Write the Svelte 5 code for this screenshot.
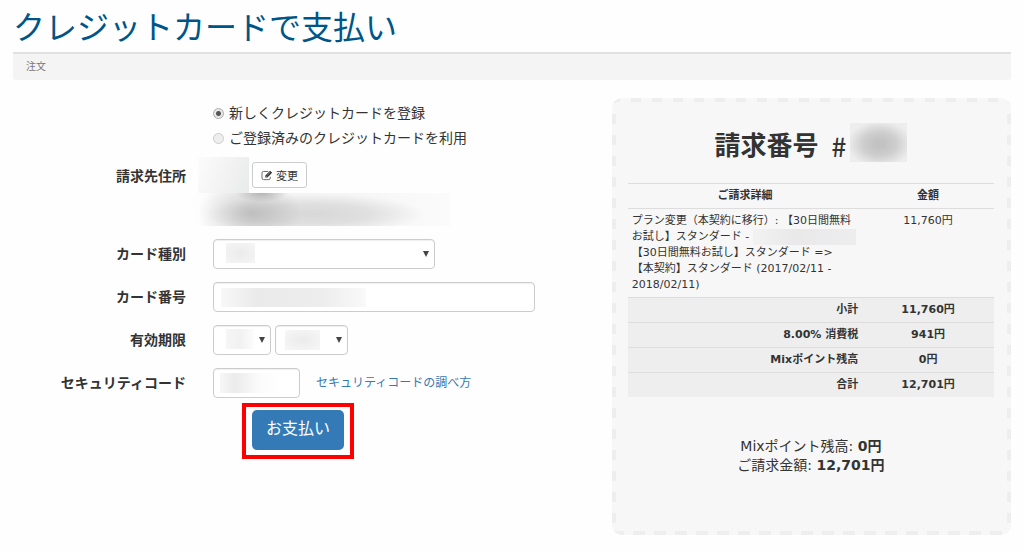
<script>
  let method = $state('new');
  const totals = [
    ['小計', '11,760円'],
    ['8.00% 消費税', '941円'],
    ['Mixポイント残高', '0円'],
    ['合計', '12,701円'],
  ];
</script>

<main>
  <h1>クレジットカードで支払い</h1>
  <nav class="crumb">注文</nav>

  <div class="columns">
    <form onsubmit={(e) => e.preventDefault()}>
      <div class="row methods">
        <div class="field stack">
          <label class="choice"><input type="radio" name="method" value="new" bind:group={method} />新しくクレジットカードを登録</label>
          <label class="choice"><input type="radio" name="method" value="saved" bind:group={method} />ご登録済みのクレジットカードを利用</label>
        </div>
      </div>

      <div class="row address">
        <span class="label">請求先住所</span>
        <div class="addr">
          <div class="addr-top">
            <span class="mask name"></span>
            <button type="button" class="edit">
              <svg viewBox="0 0 14 13" width="12" height="11" aria-hidden="true">
                <path d="M8.6 1.7H3A1.9 1.9 0 0 0 1.100 3.600V9.500A1.900 1.900 0 0 0 3 11.400H9A1.900 1.900 0 0 0 10.900 9.500V8" fill="none" stroke="#555" stroke-width="1" />
                <path d="M5 6.600L10.700 .9L13.100 3.300L7.400 9H5Z" fill="#333" />
                <path d="M6 7L7 8M7.300 6L10.400 2.900" stroke="#fff" stroke-width=".6" />
              </svg>
              変更
            </button>
          </div>
          <div class="mask lines"></div>
        </div>
      </div>

      <div class="row">
        <label class="label" for="kind">カード種別</label>
        <div class="field"><span class="drop wide"><select id="kind" class="m-kind"><option></option></select></span></div>
      </div>
      <div class="row">
        <label class="label" for="number">カード番号</label>
        <div class="field"><input id="number" class="text number" type="text" /></div>
      </div>
      <div class="row">
        <label class="label" for="month">有効期限</label>
        <div class="field">
          <span class="drop month"><select id="month" class="m-month"><option></option></select></span>
          <span class="drop year"><select aria-label="年" class="m-year"><option></option></select></span>
        </div>
      </div>
      <div class="row">
        <label class="label" for="code">セキュリティコード</label>
        <div class="field"><input id="code" class="text code" type="text" /><a href="#help">セキュリティコードの調べ方</a></div>
      </div>
      <div class="submit"><span class="frame"><button class="pay">お支払い</button></span></div>
    </form>

    <aside>
      <h2>請求番号 <span class="hash">#</span><span class="mask id"></span></h2>
      <table>
        <thead>
          <tr><th>ご請求詳細</th><th>金額</th></tr>
        </thead>
        <tbody>
          <tr>
            <td>
              プラン変更（本契約に移行）: 【30日間無料<br />お試し】スタンダード - <span class="mask item"></span><br />【30日間無料お試し】スタンダード =&gt;<br />【本契約】スタンダード (2017/02/11 -<br />2018/02/11)
            </td>
            <td>11,760円</td>
          </tr>
        </tbody>
        <tfoot>
          {#each totals as [name, value]}
            <tr><th>{name}</th><td>{value}</td></tr>
          {/each}
        </tfoot>
      </table>
      <p>Mixポイント残高: <b>0円</b><br />ご請求金額: <b>12,701円</b></p>
    </aside>
  </div>
</main>

<style>
  :global(body) {
    background: #fefefe;
  }
  main, button, input, select {
    font-family: "DejaVu Sans", "Noto Sans CJK JP", sans-serif;
  }
  main {
    padding: 0 13px;
    color: #333;
    font-size: 14px;
    line-height: 20px;
  }
  * {
    box-sizing: border-box;
  }
  h1 {
    margin: 0;
    padding: 8px 0 4px;
    font-size: 32px;
    line-height: 40px;
    font-weight: 400;
    color: #058;
  }
  .crumb {
    border-top: 2px solid #e1e1e1;
    border-radius: 0 0 3px 3px;
    background: #f4f4f4;
    padding: 3px 13px;
    font-size: 10px;
    color: #777;
    height: 28px;
    line-height: 20px;
  }
  .columns {
    display: grid;
    grid-template-columns: 3fr 2fr;
    align-items: start;
    padding-top: 18px;
  }
  form {
    padding-top: 3px;
  }
  .row {
    display: grid;
    grid-template-columns: 173px 1fr;
    column-gap: 27px;
    margin-bottom: 13px;
  }
  .row .label {
    text-align: right;
    font-weight: 700;
    line-height: 30px;
  }
  .field {
    grid-column: 2;
    display: flex;
    align-items: center;
    gap: 4px;
  }
  .methods {
    margin-bottom: 6px;
  }
  .stack {
    flex-direction: column;
    align-items: flex-start;
    gap: 0;
  }
  .choice {
    display: flex;
    align-items: center;
    line-height: 25px;
  }
  .choice input {
    appearance: none;
    width: 11px;
    height: 11px;
    margin: 0 5px 0 0;
    border: 1px solid #ccc;
    border-radius: 50%;
    background: #eee;
  }
  .choice input:checked {
    border-color: #aaa;
    background: radial-gradient(circle, #555 0 2px, #e8e8e8 3px);
  }
  .address {
    column-gap: 4px;
  }
  .address .label {
    padding-top: 4px;
  }
  .mask {
    display: inline-block;
  }
  .addr-top {
    display: flex;
    align-items: center;
    gap: 3px;
    padding-left: 8px;
  }
  .name {
    width: 51px;
    height: 36px;
    background: linear-gradient(110deg, #fcfcfc, #f4f4f4 45%, #e9eaea);
  }
  .edit {
    display: flex;
    align-items: center;
    gap: 3px;
    height: 26px;
    padding: 0 8px;
    border: 1px solid #ccc;
    border-radius: 3px;
    background: #fff;
    color: #333;
    font-size: 11px;
  }
  .lines {
    display: block;
    width: 260px;
    height: 33px;
    background:
      radial-gradient(ellipse 26px 9px at 72px 0, #8888, #8880),
      radial-gradient(ellipse 52px 34px at 60px 20px, #8886, #8883 50%, #8880),
      radial-gradient(ellipse 110px 20px at 125px 21px, #8884, #8883 50%, #8880),
      linear-gradient(90deg, #fefefe, #f5f5f5 25%, #f5f5f5 60%, #fbfbfb);
  }
  .drop {
    position: relative;
    display: block;
  }
  .drop::after {
    content: "";
    position: absolute;
    right: 6px;
    top: 12px;
    width: 6px;
    height: 6px;
    background: #444;
    clip-path: polygon(0 0, 100% 0, 50% 100%);
    pointer-events: none;
  }
  .wide {
    width: 222px;
  }
  .month {
    width: 58px;
  }
  .year {
    width: 73px;
  }
  select, .text {
    appearance: none;
    display: block;
    width: 100%;
    height: 30px;
    margin: 0;
    padding: 0 12px;
    border: 1px solid #ccc;
    border-radius: 4px;
    background-color: #fff;
    background-repeat: no-repeat;
    box-shadow: inset 0 1px 1px #0001;
    font-size: 14px;
  }
  .m-kind {
    background-image: radial-gradient(ellipse, #ebebeb, #f5f5f5);
    background-size: 29px 20px;
    background-position: 12px 3px;
  }
  .m-month {
    background-image: linear-gradient(90deg, #f6f6f6, #f1f1f1 50%, #fcfcfc);
    background-size: 28px 20px;
    background-position: 12px 3px;
  }
  .m-year {
    background-image: radial-gradient(ellipse, #ebebeb, #f7f7f7);
    background-size: 35px 20px;
    background-position: 9px 4px;
  }
  .text.number {
    width: 322px;
    background-image: linear-gradient(90deg, #f8f8f8, #eaeaea 25%, #ededed 70%, #f9f9f9);
    background-size: 145px 19px;
    background-position: 7px 5px;
  }
  .text.code {
    width: 87px;
    background-image: linear-gradient(90deg, #f7f7f7, #ebebeb 25%, #fbfbfb 65%, #fff);
    background-size: 60px 20px;
    background-position: 6px 4px;
  }
  a {
    margin-left: 12px;
    font-size: 12px;
    line-height: 16px;
    color: #337ab7;
    text-decoration: none;
  }
  .submit {
    margin-top: -8px;
    padding-left: 229px;
  }
  .frame {
    display: inline-block;
    padding: 3px 6px 5px;
    border: 4px solid #f00;
  }
  .pay {
    display: block;
    height: 40px;
    padding: 0 14px 2px;
    border: 0;
    border-radius: 5px;
    background: #337ab7;
    color: #fff;
    font-size: 16px;
    line-height: 36px;
  }
  aside {
    min-height: 437px;
    padding: 25px 17px 25px 16px;
    border-radius: 10px;
    background:
      repeating-linear-gradient(90deg, #eee 0 8px, #f7f7f7 8px 19px, #eee 19px 21px) top / 100% 4px no-repeat,
      repeating-linear-gradient(90deg, #eee 0 12px, #f7f7f7 12px 21px) bottom / 100% 4px no-repeat,
      repeating-linear-gradient(#eee 0 5px, #f7f7f7 5px 16px, #eee 16px 21px) left / 4px 100% no-repeat,
      repeating-linear-gradient(#eee 0 5px, #f7f7f7 5px 16px, #eee 16px 21px) right / 4px 100% no-repeat,
      #f7f7f7;
    text-align: center;
  }
  h2 {
    display: flex;
    justify-content: center;
    align-items: flex-end;
    margin: 0 0 21px;
    font-size: 26px;
    line-height: 32px;
    white-space: pre;
  }
  .hash {
    font-family: "Noto Sans CJK JP", sans-serif;
    font-weight: 500;
    padding: 0 2px 0 4px;
  }
  .id {
    width: 57px;
    height: 39px;
    margin-left: 2px;
    background: radial-gradient(ellipse at 52% 54%, #c2c2c2 10%, #cecece 40%, #ededed 76%);
  }
  table {
    width: 100%;
    border-collapse: collapse;
    table-layout: fixed;
    font-size: 11px;
    line-height: 16px;
  }
  th, td {
    border-top: 1px solid #ddd;
    padding: 4px;
    vertical-align: top;
  }
  th:first-child {
    width: 64%;
  }
  tbody td:first-child {
    text-align: left;
    white-space: nowrap;
  }
  .item {
    width: 103px;
    height: 16px;
    vertical-align: top;
    background: linear-gradient(90deg, #f2f2f2, #e9e9e9 40%, #ededed);
  }
  tfoot tr {
    background: #eee;
    font-weight: 700;
  }
  tfoot th {
    text-align: right;
  }
  p {
    margin: 40px 0 0;
    line-height: 19px;
  }
</style>
